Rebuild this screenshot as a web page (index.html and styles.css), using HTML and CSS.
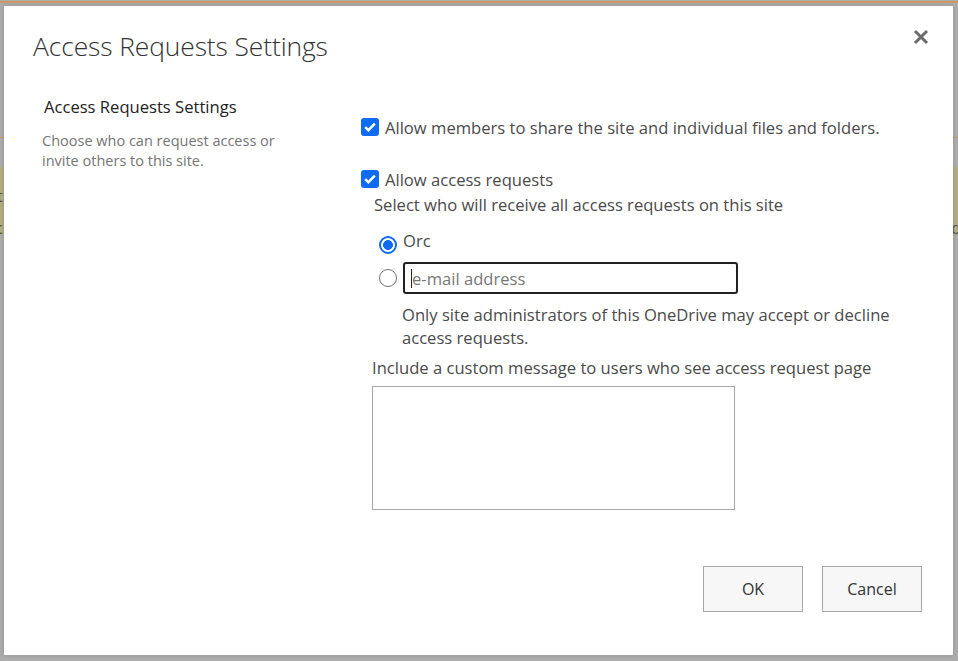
FILE: index.html
```html
<!DOCTYPE html>
<html lang="en">
<head>
<meta charset="utf-8">
<title>Access Requests Settings</title>
<link rel="stylesheet" href="styles.css">
</head>
<body>
<div class="page">
  <div class="page-topline"></div>
  <div class="page-ribbon"></div>
  <div class="page-band"><span class="frag-l1">t:</span><span class="frag-l2">c</span><span class="frag-r">d</span></div>
</div>
<div class="dialog">
  <div class="dlg-header">
    <h1 class="dlg-title">Access Requests Settings</h1>
    <button class="dlg-close" aria-label="Close">
      <svg width="16" height="16" viewBox="0 0 16 16"><path d="M2 2 L14 14 M14 2 L2 14" stroke="#6b6b6b" stroke-width="3" stroke-linecap="butt"/></svg>
    </button>
  </div>
  <div class="dlg-body">
    <div class="section-info">
      <div class="section-title">Access Requests Settings</div>
      <div class="section-desc">Choose who can request access or invite others to this site.</div>
    </div>
    <div class="section-controls">
      <label class="check-row first">
        <span class="check"><svg width="12" height="10" viewBox="0 0 12 10"><path d="M1.2 5.2 L4.4 8.2 L10.8 1.6" fill="none" stroke="#fff" stroke-width="2.4"/></svg></span>
        <span class="check-label">Allow members to share the site and individual files and folders.</span>
      </label>
      <label class="check-row second">
        <span class="check"><svg width="12" height="10" viewBox="0 0 12 10"><path d="M1.2 5.2 L4.4 8.2 L10.8 1.6" fill="none" stroke="#fff" stroke-width="2.4"/></svg></span>
        <span class="check-label">Allow access requests</span>
      </label>
      <div class="select-text">Select who will receive all access requests on this site</div>
      <div class="radio-group">
        <div class="radio-row">
          <span class="radio checked"></span>
          <span class="radio-label">Orc</span>
        </div>
        <div class="radio-row email-row">
          <span class="radio"></span>
          <div class="email-box"><span class="caret"></span><span class="placeholder">e-mail address</span></div>
        </div>
        <div class="radio-note">Only site administrators of this OneDrive may accept or decline access requests.</div>
      </div>
      <div class="msg-label">Include a custom message to users who see access request page</div>
      <div class="msg-box"></div>
    </div>
  </div>
  <div class="dlg-footer">
    <button class="btn">OK</button>
    <button class="btn">Cancel</button>
  </div>
</div>
</body>
</html>
```
FILE: styles.css
```css
html, body {
  margin: 0;
  padding: 0;
}
body {
  width: 958px;
  height: 661px;
  overflow: hidden;
  background: #acacac;
  font-family: "Open Sans", "Noto Sans", sans-serif;
  position: relative;
}
.page {
  display: flex;
  flex-direction: column;
}
.page-topline {
  height: 2px;
  margin-top: 1px;
  background: #c79b62;
}
.page-ribbon {
  height: 1px;
  margin-top: 134px;
  background: #c79b62;
}
.page-band {
  height: 68px;
  margin-top: 29px;
  background: #b2ad84;
  position: relative;
  color: #555;
  font-size: 16px;
}
.frag-l1 { position: absolute; left: -3px; top: 18px; }
.frag-l2 { position: absolute; left: -5px; top: 50px; }
.frag-r { position: absolute; right: -3px; top: 50px; }

.dialog {
  position: absolute;
  left: 4px;
  top: 6px;
  width: 949px;
  height: 649px;
  background: #fff;
  box-shadow: 0 0 4px rgba(0,0,0,0.15);
  display: flex;
  flex-direction: column;
  color: #444;
}
.dlg-header {
  display: flex;
  justify-content: space-between;
  align-items: flex-start;
  padding: 22px 24px 0 29px;
  height: 60px;
  box-sizing: border-box;
}
.dlg-title {
  margin: 0;
  font-weight: 300;
  font-size: 26.4px;
  line-height: 36px;
  color: #333;
  letter-spacing: -0.1px;
}
.dlg-close {
  border: 0;
  background: none;
  padding: 0;
  margin-top: 1px;
  width: 16px;
  height: 16px;
  cursor: pointer;
}
.dlg-close svg { display: block; }

.dlg-body {
  display: flex;
  padding-left: 38px;
  flex: 1;
}
.section-info {
  width: 255px;
  padding-top: 30px;
}
.section-title {
  font-size: 16.6px;
  line-height: 22px;
  color: #222;
  padding-left: 2px;
}
.section-desc {
  margin-top: 13px;
  font-size: 14.5px;
  line-height: 20px;
  color: #757575;
}
.section-controls {
  margin-left: 64px;
  padding-top: 50px;
  font-size: 16.6px;
  color: #4a4a4a;
}
.check-row {
  display: flex;
  align-items: center;
  gap: 6px;
  height: 22px;
}
.check-row.second { margin-top: 30px; }
.check {
  width: 18px;
  height: 18px;
  border-radius: 3px;
  background: #0f6cf2;
  display: flex;
  align-items: center;
  justify-content: center;
}
.check svg { display: block; }
.select-text {
  margin-top: 4px;
  padding-left: 13px;
  line-height: 22px;
}
.radio-group {
  padding-left: 18px;
  margin-top: 15px;
}
.radio-row {
  display: flex;
  align-items: flex-start;
  gap: 6px;
}
.radio {
  width: 18px;
  height: 18px;
  box-sizing: border-box;
  border-radius: 50%;
  border: 1px solid #707070;
  margin-top: 5px;
  background: #fff;
}
.radio.checked {
  border: 2px solid #0f6cf2;
  background: radial-gradient(circle, #0f6cf2 0 4.6px, #fff 5.2px);
}
.radio-label {
  line-height: 20px;
}
.email-row {
  margin-top: 8px;
  align-items: center;
}
.email-row .radio { margin-top: 0; }
.email-box {
  width: 335px;
  height: 32px;
  box-sizing: border-box;
  border: 2px solid #222;
  border-radius: 3px;
  display: flex;
  align-items: center;
  padding-left: 6px;
  color: #777;
}
.caret {
  width: 1px;
  height: 19px;
  background: #222;
}
.radio-note {
  padding-left: 23px;
  margin-top: 9px;
  line-height: 23px;
  width: 495px;
}
.msg-label {
  margin-top: 7px;
  padding-left: 11px;
  line-height: 24px;
}
.msg-box {
  margin-left: 11px;
  margin-top: 6px;
  width: 363px;
  height: 124px;
  box-sizing: border-box;
  border: 1px solid #a6a6a6;
}
.dlg-footer {
  display: flex;
  justify-content: flex-end;
  gap: 19px;
  padding: 0 31px 43px 0;
}
.btn {
  width: 100px;
  height: 46px;
  background: #f7f7f7;
  border: 1px solid #a6a6a6;
  font-family: "Open Sans", "Noto Sans", sans-serif;
  font-size: 16px;
  color: #333;
  padding: 0;
}
```
